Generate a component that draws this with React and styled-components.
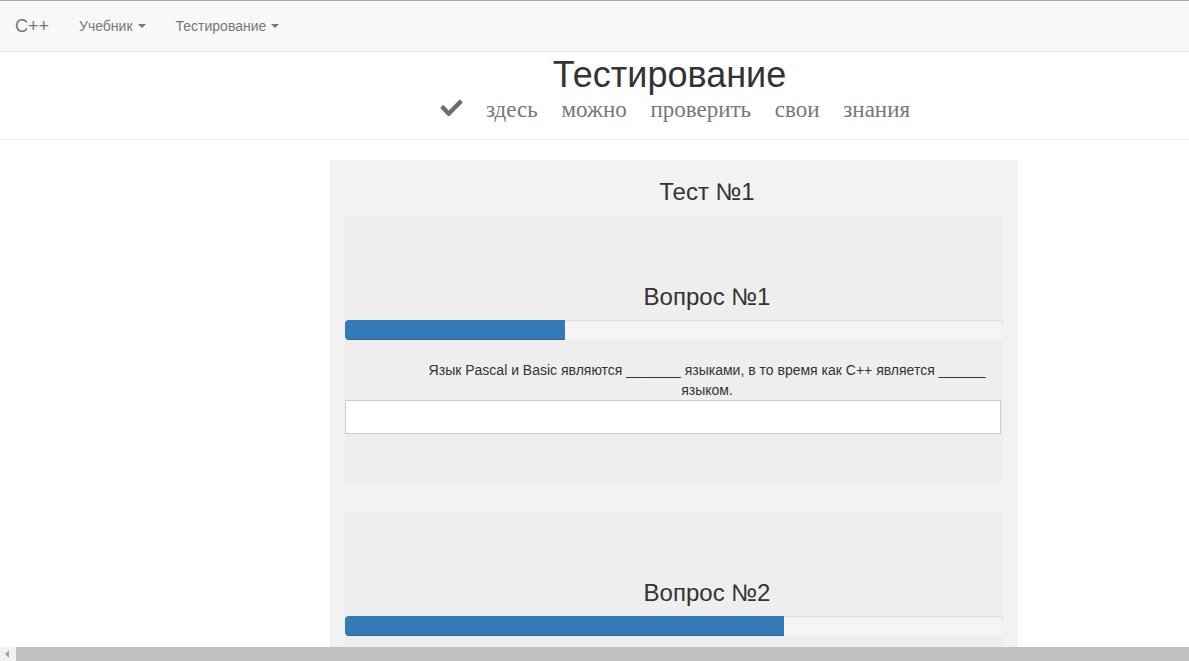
import React from 'react'
import styled, { createGlobalStyle } from 'styled-components'
import { FaCheck } from 'react-icons/fa'

const GlobalStyle = createGlobalStyle`
  html, body {
    margin: 0;
    padding: 0;
    overflow: hidden;
    background: #fff;
  }
  body {
    font-family: "Liberation Sans", Arial, sans-serif;
    font-size: 14px;
    line-height: 1.42857;
    color: #333;
  }
  * { box-sizing: border-box; }
`

const Page = styled.div`
  width: 1348px;
  height: 661px;
  border-top: 1px solid #adadad;
`

const Navbar = styled.nav`
  height: 51px;
  background: #f8f8f8;
  border-bottom: 1px solid #e7e7e7;
  display: flex;
  align-items: center;
`

const Brand = styled.a`
  font-size: 18px;
  color: #777;
  padding: 0 15px 0 15px;
  line-height: 50px;
`

const NavItem = styled.a`
  font-size: 14px;
  color: #777;
  padding: 0 15px;
  line-height: 50px;
  display: flex;
  align-items: center;
`

const Caret = styled.span`
  display: inline-block;
  width: 0;
  height: 0;
  margin-left: 5px;
  border-top: 4px solid #777;
  border-left: 4px solid transparent;
  border-right: 4px solid transparent;
`

const Header = styled.header`
  border-bottom: 1px solid #eee;
  text-align: center;
  padding: 2px 0 15px;
`

const Title = styled.h1`
  margin: 0;
  font-size: 36px;
  font-weight: 400;
  line-height: 42px;
  color: #333;
  padding-right: 9px;
`

const Lead = styled.p`
  margin: 0;
  font-family: "Liberation Serif", "Times New Roman", serif;
  font-size: 23px;
  line-height: 28px;
  color: #777;
  word-spacing: 18px;
  display: flex;
  align-items: center;
  justify-content: center;
  gap: 22px;
  padding-left: 1px;
`

const CheckIcon = styled(FaCheck)`
  width: 25px;
  height: 22px;
  color: #6e6e6e;
  margin-top: -5px;
`

const Panel = styled.section`
  width: 688px;
  margin: 20px auto 0;
  background: #f2f2f2;
  padding: 0 15px 30px;
`

const TestTitle = styled.h2`
  margin: 0;
  padding: 16px 0 8px 66px;
  font-size: 24px;
  font-weight: 400;
  line-height: 32px;
  text-align: center;
  color: #333;
`

const Question = styled.div`
  background: #eee;
  padding-top: 62px;
  padding-bottom: ${p => p.$pb}px;
  margin-bottom: 30px;
`

const QuestionTitle = styled.h3`
  margin: 0 0 4px;
  padding-left: 66px;
  font-size: 24px;
  font-weight: 400;
  line-height: 38px;
  text-align: center;
  color: #333;
`

const Progress = styled.div`
  height: 20px;
  background: #f5f5f5;
  border-radius: 4px;
  overflow: hidden;
  box-shadow: inset 0 1px 2px rgba(0, 0, 0, 0.1);
`

const ProgressFill = styled.div`
  height: 100%;
  background: #337ab7;
  box-shadow: inset 0 -1px 0 rgba(0, 0, 0, 0.15);
`

const QuestionText = styled.p`
  margin: 20px 0 0 62px;
  width: 600px;
  text-align: center;
  line-height: 20px;
  color: #333;
`

const Answer = styled.input`
  display: block;
  width: 656px;
  height: 34px;
  margin-top: 0;
  border: 1px solid #ccc;
  background: #fff;
  padding: 6px 12px;
  font-size: 14px;
  outline: none;
`

const Scrollbar = styled.div`
  position: fixed;
  left: 0;
  right: 0;
  bottom: 0;
  height: 14px;
  background: #f1f1f1;
  display: flex;
  align-items: stretch;
`

const ScrollArrow = styled.div`
  width: 16px;
  display: flex;
  align-items: center;
  justify-content: center;
  &::before {
    content: '';
    border-right: 4px solid #a3a3a3;
    border-top: 4px solid transparent;
    border-bottom: 4px solid transparent;
    margin-right: 2px;
  }
`

const ScrollThumb = styled.div`
  flex: 1;
  background: #c1c1c1;
`

const questions = [
  {
    n: 1,
    pct: 33.4,
    text: 'Язык Pascal и Basic являются _______ языками, в то время как C++ является ______ языком.',
  },
  { n: 2, pct: 66.7 },
]

export default function App() {
  return (
    <>
      <GlobalStyle />
      <Page>
        <Navbar>
          <Brand>C++</Brand>
          <NavItem>Учебник<Caret /></NavItem>
          <NavItem>Тестирование<Caret /></NavItem>
        </Navbar>
        <Header>
          <Title>Тестирование</Title>
          <Lead>
            <CheckIcon />
            <span>здесь можно проверить свои знания</span>
          </Lead>
        </Header>
        <Panel>
          <TestTitle>Тест №1</TestTitle>
          {questions.map(q => (
            <Question key={q.n} $pb={q.text ? 48 : 10}>
              <QuestionTitle>Вопрос №{q.n}</QuestionTitle>
              <Progress>
                <ProgressFill style={{ width: `${q.pct}%` }} />
              </Progress>
              {q.text && (
                <>
                  <QuestionText>{q.text}</QuestionText>
                  <Answer type="text" />
                </>
              )}
            </Question>
          ))}
        </Panel>
      </Page>
      <Scrollbar>
        <ScrollArrow />
        <ScrollThumb />
      </Scrollbar>
    </>
  )
}
